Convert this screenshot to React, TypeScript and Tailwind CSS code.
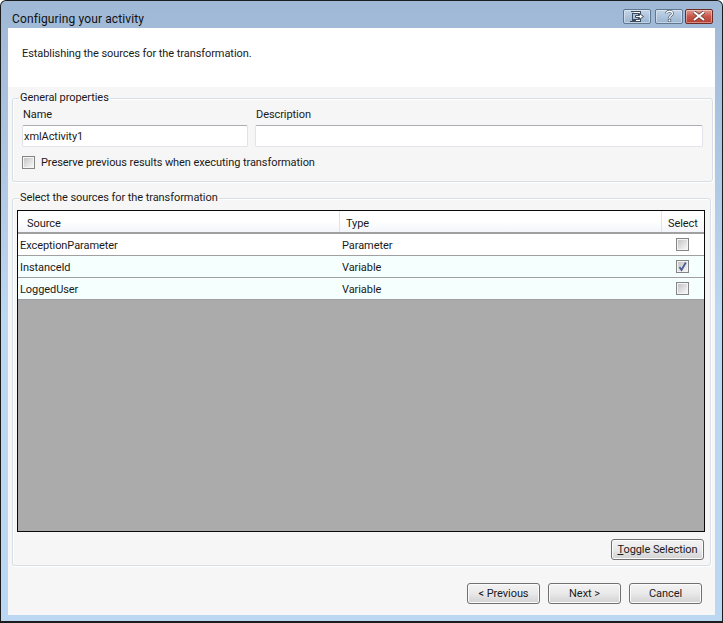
import React from "react";

function Check({ checked }: { checked?: boolean }) {
  return (
    <div className="w-[13px] h-[13px] border border-[#858585] bg-[#f4f4f4] p-px">
      <div className="w-full h-full bg-gradient-to-br from-[#c4c4c4] to-[#f7f7f7] relative">
        {checked && (
          <svg viewBox="0 0 11 11" className="absolute -left-[1px] -top-[1px] w-[11px] h-[11px]">
            <path d="M2.5 6 L4.5 9 L8.8 1.5" fill="none" stroke="#4a5f97" strokeWidth="1.8" />
          </svg>
        )}
      </div>
    </div>
  );
}

function Btn({ children, w }: { children: React.ReactNode; w: string }) {
  return (
    <button
      className={`${w} h-[21px] flex items-center justify-center whitespace-nowrap rounded-[3px] border border-[#707070] text-[#1a1a1a] shadow-[inset_0_0_0_1px_#fbfbfb] bg-gradient-to-b from-[#f3f3f3] via-[#e9e9e9] to-[#d2d2d2]`}
    >
      {children}
    </button>
  );
}

function CaptionBtn({ w, cls, children }: { w: string; cls: string; children: React.ReactNode }) {
  return (
    <div className={`${w} h-[15px] rounded-[2px] border flex items-center justify-center shadow-[inset_0_0_0_1px_rgba(255,255,255,0.4)] ${cls}`}>
      {children}
    </div>
  );
}

function Row({ src, type, checked, bg }: { src: string; type: string; checked?: boolean; bg: string }) {
  return (
    <div className={`h-[22px] flex items-center border-b border-[#a0a0a0] ${bg}`}>
      <div className="w-[322px] pl-[2px] pt-[2px]">{src}</div>
      <div className="flex-1 pl-[2px] pt-[2px]">{type}</div>
      <div className="w-[42px] pl-[14px]">
        <Check checked={checked} />
      </div>
    </div>
  );
}

export default function App() {
  return (
    <div
      className="w-[723px] h-[623px] flex flex-col border border-b-2 border-[#1c1c1c] rounded-t-[6px] bg-gradient-to-b from-[#9fb8d6] via-[#bcd7f1] to-[#bcd7f1] text-[11px] tracking-[-0.07px] leading-[16px] text-[#1a1a1a] overflow-hidden"
      style={{ fontFamily: 'Roboto, "Noto Sans", sans-serif' }}
    >
      <div className="h-[27px] shrink-0 flex items-center justify-between pl-[11px] pr-[9px]">
        <span className="text-[#111] text-[12px] tracking-[0.12px] pt-[8px]">Configuring your activity</span>
        <div className="flex gap-[4px] mt-[3px] items-start">
          <CaptionBtn w="w-[28px]" cls="border-[#5f7791] bg-gradient-to-b from-[#c4d5e8] to-[#9ab5d1]">
            <svg viewBox="0 0 14 11" className="w-[14px] h-[11px]" shapeRendering="crispEdges">
              <path d="M0.5 0.5 H10.5 V3.5 M10.5 7.5 V10.5 H0.5 Z" fill="#fff" stroke="#3c4c5e" />
              <path d="M2.5 2.5 H8.5 V8.5 H2.5 Z" fill="#a8c0da" stroke="#3c4c5e" />
              <path d="M5.5 4.5 H9.5 V2.5 L13.5 5.5 L9.5 8.5 V6.5 H5.5 Z" fill="#fff" stroke="#3c4c5e" shapeRendering="auto" />
            </svg>
          </CaptionBtn>
          <CaptionBtn w="w-[28px]" cls="border-[#5f7791] bg-gradient-to-b from-[#c4d5e8] to-[#9ab5d1]">
            <svg viewBox="0 0 9 12" className="w-[9px] h-[12px]">
              <path d="M1.5 3.5 C1.5 0.5 7.5 0.5 7.5 3.5 C7.5 5.5 4.5 5.5 4.5 8" fill="none" stroke="#3c4c5e" strokeWidth="2.6" />
              <path d="M1.5 3.5 C1.5 0.5 7.5 0.5 7.5 3.5 C7.5 5.5 4.5 5.5 4.5 8" fill="none" stroke="#fff" strokeWidth="1.4" />
              <rect x="3.2" y="9.2" width="2.6" height="2.6" fill="#fff" stroke="#3c4c5e" strokeWidth="0.6" />
            </svg>
          </CaptionBtn>
          <CaptionBtn w="w-[28px]" cls="border-[#6e2a24] bg-gradient-to-b from-[#dc9a8e] via-[#c8574a] to-[#b53d30] -ml-[2px]">
            <svg viewBox="0 0 14 10" className="w-[14px] h-[10px]">
              <path d="M2 1 L12 9 M12 1 L2 9" stroke="#51302c" strokeWidth="3.4" />
              <path d="M2 1 L12 9 M12 1 L2 9" stroke="#fff" strokeWidth="2.2" />
            </svg>
          </CaptionBtn>
        </div>
      </div>

      <div className="flex-1 mx-[7px] mb-[6px] bg-[#f6f6f6] flex flex-col min-h-0">
        <div className="h-[59px] shrink-0 bg-white flex items-center pl-[14px] pb-[8px]">
          Establishing the sources for the transformation.
        </div>

        <fieldset className="mx-[4px] mt-[3px] h-[92px] shrink-0 border border-[#d5dfe5] rounded-[3px] shadow-[inset_1px_1px_0_#fff,1px_1px_0_#fff] pl-[8px] pr-[9px]">
          <legend className="ml-[-2px] px-[1px] mb-[-1px] text-[#1a1a1a]">General properties</legend>
          <div className="flex gap-[7px] pt-[2px] pl-px">
            <div className="w-[226px]">
              <div className="pl-[1px] h-[18px]">Name</div>
              <input
                readOnly
                value="xmlActivity1"
                className="block w-full h-[22px] px-px bg-white border border-[#e2e3ea] border-t-[#abadb3] rounded-[2px] outline-none"
              />
            </div>
            <div className="w-[448px]">
              <div className="pl-[1px] h-[18px]">Description</div>
              <input
                readOnly
                value=""
                className="block w-full h-[22px] bg-white border border-[#e2e3ea] border-t-[#abadb3] rounded-[2px] outline-none"
              />
            </div>
          </div>
          <div className="flex items-center gap-[6px] mt-[7px] ml-[1px]">
            <Check />
            <span className="pt-[1px]">Preserve previous results when executing transformation</span>
          </div>
        </fieldset>

        <fieldset className="mx-[4px] mt-[8px] h-[376px] shrink-0 border border-[#d5dfe5] rounded-[3px] shadow-[inset_1px_1px_0_#fff,1px_1px_0_#fff] px-[4px]">
          <legend className="ml-[2px] px-[1px] mb-[-1px]">Select the sources for the transformation</legend>
          <div className="mt-[5px] mr-[1px] h-[322px] border border-[#0a0a0a] bg-[#ababab] flex flex-col">
            <div className="h-[23px] shrink-0 flex items-stretch border-b-2 border-[#a0a0a0] bg-gradient-to-b from-white via-white to-[#f3f5fb]">
              <div className="w-[322px] pl-[9px] pt-[5px] flex items-center border-r border-[#e0e3e8]">Source</div>
              <div className="flex-1 pl-[6px] pt-[5px] flex items-center border-r border-[#e0e3e8]">Type</div>
              <div className="w-[42px] pl-[6px] pt-[5px] flex items-center">Select</div>
            </div>
            <Row src="ExceptionParameter" type="Parameter" bg="bg-white" />
            <Row src="InstanceId" type="Variable" checked bg="bg-[#f5fffe]" />
            <Row src="LoggedUser" type="Variable" bg="bg-[#f5fffe]" />
          </div>
          <div className="flex justify-end mt-[7px] mr-[2px]">
            <Btn w="w-[93px]">
              <span className="pt-[1px]"><span className="underline">T</span>oggle Selection</span>
            </Btn>
          </div>
        </fieldset>

        <div className="flex justify-end gap-[8px] mt-[17px] pr-[13px]">
          <Btn w="w-[73px]"><span className="pt-[1px]">&lt; Previous</span></Btn>
          <Btn w="w-[73px]"><span className="pt-[1px]">Next &gt;</span></Btn>
          <Btn w="w-[73px]"><span className="pt-[1px]">Cancel</span></Btn>
        </div>
      </div>
    </div>
  );
}
